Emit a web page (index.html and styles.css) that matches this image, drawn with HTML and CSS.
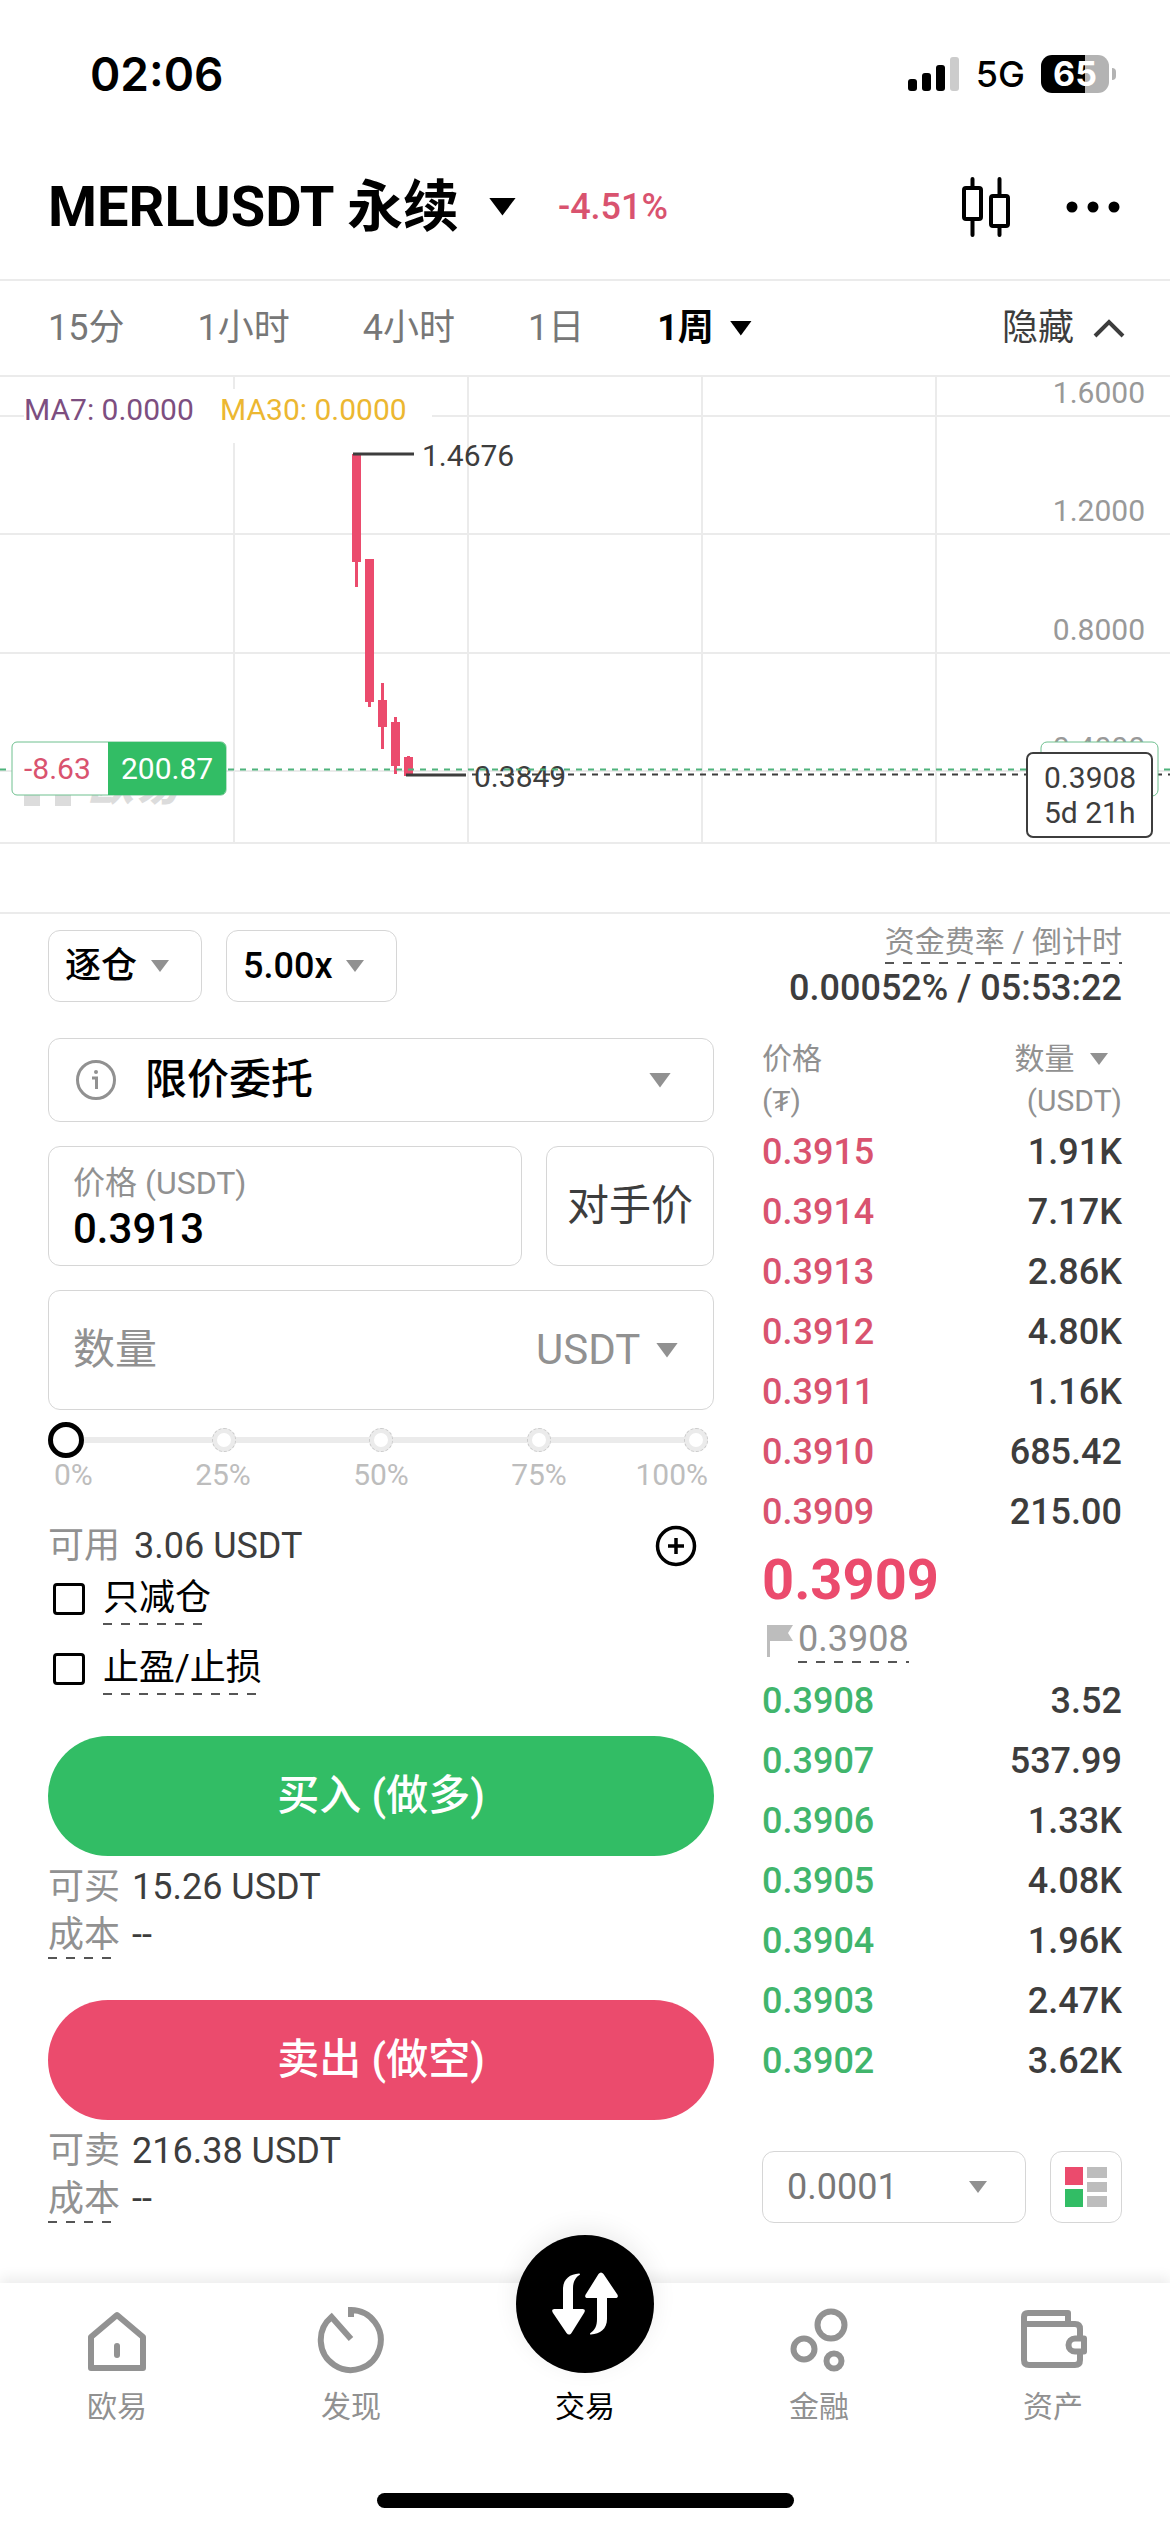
FILE: index.html
```html
<!DOCTYPE html>
<html lang="zh-CN">
<head>
  <meta charset="UTF-8">
  <meta name="viewport" content="width=device-width, initial-scale=1.0">
  <title>MERLUSDT 永续</title>
  <link rel="stylesheet" href="styles.css">
</head>
<body>
  <div class="status-bar">
    <span class="time">02:06</span>
    <div class="status-icons">
      <svg class="signal" viewBox="0 0 52 36" aria-hidden="true">
        <rect x="0" y="23" width="9" height="12" rx="3"/>
        <rect x="14" y="17" width="9" height="18" rx="3"/>
        <rect x="28" y="9" width="9" height="26" rx="3"/>
        <rect x="42" y="1" width="9" height="34" rx="3" fill="#ccc"/>
      </svg>
      <span class="network">5G</span>
      <div class="battery"><span class="battery-body">65</span><span class="battery-tip"></span></div>
    </div>
  </div>

  <header class="header">
    <button class="pair">
      <h1>MERLUSDT 永续</h1>
      <span class="caret caret-lg"></span>
    </button>
    <span class="change">-4.51%</span>
    <div class="header-actions">
      <button aria-label="K线">
        <svg width="48" height="60" viewBox="0 0 48 60" fill="none" stroke="#000" stroke-width="4" stroke-linecap="round">
          <rect x="2" y="11" width="17" height="31" rx="2"/>
          <rect x="29" y="19" width="17" height="30" rx="2"/>
          <path d="M10.500 2v9M10.500 42v16M37.500 2v17M37.500 49v9"/>
        </svg>
      </button>
      <button aria-label="更多">
        <svg width="54" height="12" viewBox="0 0 54 12">
          <circle cx="6" cy="6" r="5.500"/>
          <circle cx="27" cy="6" r="5.500"/>
          <circle cx="48" cy="6" r="5.500"/>
        </svg>
      </button>
    </div>
  </header>

  <nav class="tabs">
    <button>15分</button>
    <button>1小时</button>
    <button>4小时</button>
    <button>1日</button>
    <button class="active">1周 <span class="caret caret-md"></span></button>
    <button class="hide-btn">隐藏
      <svg width="34" height="22" viewBox="0 0 34 22" fill="none" stroke="#3d3d3d" stroke-width="4"><path d="M3 19 17 5l14 14"/></svg>
    </button>
  </nav>

  <svg class="chart" viewBox="0 0 1170 470" fill="#3d3d3d">
    <!-- grid -->
    <path class="grid" d="M0 1H1170M0 41H1170M0 159H1170M0 278H1170M0 396H1170M0 468H1170M234 0V468M468 0V468M702 0V468M936 0V468"/>
    <rect x="24" y="14" width="408" height="54" fill="#fff"/>
    <text x="24" y="45" fill="#7d4e80">MA7: 0.0000</text>
    <text x="220" y="45" fill="#ecb731">MA30: 0.0000</text>

    <!-- axis labels -->
    <g class="axis">
      <text x="1145" y="28">1.6000</text>
      <text x="1145" y="146">1.2000</text>
      <text x="1145" y="265">0.8000</text>
      <text x="1145" y="383">0.4000</text>
    </g>

    <!-- watermark -->
    <g fill="#dcdcdc">
      <path d="M24 398h16v33H24zM55 398h16v33H55z"/>
      <text class="watermark" x="88" y="425">欧易</text>
    </g>

    <!-- candles -->
    <g fill="#eb4b6d">
      <path d="M352 79h9v108h-9zM355 187h3v25h-3z"/>
      <path d="M365 184h9v143h-9zM368 327h3v5h-3z"/>
      <path d="M378 325h9v27h-9zM381 308h3v66h-3z"/>
      <path d="M391 347h9v44h-9zM394 342h3v57h-3z"/>
      <path d="M404 382h9v19h-9zM407 381h3v2h-3z"/>
    </g>
    <path d="M353 79H414M406 400H466" stroke="#3d3d3d" stroke-width="3"/>
    <text x="422" y="91">1.4676</text>
    <text x="474" y="412">0.3849</text>

    <path d="M0 394.500H1170" stroke="#4fb37c" stroke-width="2" stroke-dasharray="6 6"/>
    <path d="M472 399.500H1170" stroke="#3d3d3d" stroke-width="2" stroke-dasharray="6 6"/>

    <!-- position tag -->
    <rect x="12" y="367" width="214" height="53" rx="5" fill="#fff" stroke="#6fc08f"/>
    <path d="M108 367h112a6 6 0 0 1 6 6v41a6 6 0 0 1-6 6H108z" fill="#32bd65"/>
    <text x="24" y="404" fill="#d9536f">-8.63</text>
    <text x="121" y="404" fill="#fff">200.87</text>

    <!-- last price tag -->
    <rect x="1041" y="367" width="117" height="54" rx="6" fill="#fff" stroke="#6fc08f"/>
    <rect x="1027" y="378" width="125" height="84" rx="6" fill="#fff" stroke="#3d3d3d" stroke-width="2"/>
    <text x="1044" y="413">0.3908</text>
    <text x="1044" y="448">5d 21h</text>
  </svg>

  <main class="trade">
    <section class="order-form">
      <div class="margin-row">
        <div class="select">
          <select aria-label="保证金模式"><option>逐仓</option></select>
          <span class="caret caret-sm"></span>
        </div>
        <div class="select">
          <select aria-label="杠杆"><option>5.00x</option></select>
          <span class="caret caret-sm"></span>
        </div>
      </div>

      <div class="box order-type">
        <button aria-label="说明">
          <svg width="42" height="42" viewBox="0 0 42 42" fill="none" stroke="#919191" stroke-width="3">
            <circle cx="21" cy="21" r="18.500"/>
            <path d="M17 19h4.500v11"/>
            <circle cx="21" cy="13" r="2" fill="#919191" stroke="none"/>
          </svg>
        </button>
        <div class="select">
          <select aria-label="委托类型"><option>限价委托</option></select>
          <span class="caret caret-md"></span>
        </div>
      </div>

      <div class="price-row">
        <div class="box price-box">
          <label for="price">价格 (USDT)</label>
          <input id="price" type="text" value="0.3913">
        </div>
        <button class="box counter-btn">对手价</button>
      </div>

      <div class="box amount-box">
        <input type="text" placeholder="数量" aria-label="数量">
        <div class="select">
          <select aria-label="单位"><option>USDT</option></select>
          <span class="caret caret-md"></span>
        </div>
      </div>

      <div class="slider">
        <div class="slider-dots"><i></i><i></i><i></i><i></i><i></i></div>
        <input type="range" min="0" max="100" value="0" aria-label="仓位比例">
      </div>
      <div class="slider-labels"><span>0%</span><span>25%</span><span>50%</span><span>75%</span><span>100%</span></div>

      <div class="available">
        <span class="muted">可用</span> 3.06 USDT
        <button aria-label="充值">
          <svg width="42" height="42" viewBox="0 0 42 42" fill="none" stroke="#000" stroke-width="3.500">
            <circle cx="21" cy="21" r="18.500"/>
            <path d="M13 21h16M21 13v16"/>
          </svg>
        </button>
      </div>

      <label class="check"><input type="checkbox"><span class="dashed">只减仓</span></label>
      <label class="check"><input type="checkbox"><span class="dashed">止盈/止损</span></label>

      <button class="submit buy">买入 (做多)</button>
      <div class="info">
        <p><span class="muted">可买</span> 15.26 USDT</p>
        <p><span class="muted dashed">成本</span> --</p>
      </div>
      <button class="submit sell">卖出 (做空)</button>
      <div class="info">
        <p><span class="muted">可卖</span> 216.38 USDT</p>
        <p><span class="muted dashed">成本</span> --</p>
      </div>
    </section>

    <section class="book">
      <div class="funding">
        <span class="dashed">资金费率 / 倒计时</span>
        <strong>0.00052% / 05:53:22</strong>
      </div>

      <table>
        <thead>
          <tr>
            <th>价格<br>(₮)</th>
            <th>数量 <span class="caret caret-sm"></span><br>(USDT)</th>
          </tr>
        </thead>
        <tbody class="asks">
          <tr><td>0.3915</td><td>1.91K</td></tr>
          <tr><td>0.3914</td><td>7.17K</td></tr>
          <tr><td>0.3913</td><td>2.86K</td></tr>
          <tr><td>0.3912</td><td>4.80K</td></tr>
          <tr><td>0.3911</td><td>1.16K</td></tr>
          <tr><td>0.3910</td><td>685.42</td></tr>
          <tr><td>0.3909</td><td>215.00</td></tr>
        </tbody>
        <tbody>
          <tr>
            <td class="mid" colspan="2">
              <div class="last-price">0.3909</div>
              <div class="mark-price">
                <svg width="28" height="32" viewBox="0 0 28 32" fill="#bdbdbd"><path d="M1 0h26l-5 8 5 8H4v16H1z"/></svg>
                <span class="dashed">0.3908</span>
              </div>
            </td>
          </tr>
        </tbody>
        <tbody class="bids">
          <tr><td>0.3908</td><td>3.52</td></tr>
          <tr><td>0.3907</td><td>537.99</td></tr>
          <tr><td>0.3906</td><td>1.33K</td></tr>
          <tr><td>0.3905</td><td>4.08K</td></tr>
          <tr><td>0.3904</td><td>1.96K</td></tr>
          <tr><td>0.3903</td><td>2.47K</td></tr>
          <tr><td>0.3902</td><td>3.62K</td></tr>
        </tbody>
      </table>

      <div class="book-footer">
        <div class="select">
          <select aria-label="深度"><option>0.0001</option></select>
          <span class="caret caret-sm"></span>
        </div>
        <button class="box" aria-label="盘口布局">
          <svg width="42" height="40" viewBox="0 0 42 40">
            <path d="M0 0h18v18H0z" fill="#eb4b6d"/>
            <path d="M0 22h18v18H0z" fill="#32bd65"/>
            <path d="M22 0h20v11H22zM22 15h20v10H22zM22 29h20v11H22z" fill="#bdbdbd"/>
          </svg>
        </button>
      </div>
    </section>
  </main>

  <footer class="bottom">
    <nav class="bottom-nav">
      <a href="#">
        <svg width="72" height="72" viewBox="0 0 72 72" fill="none" stroke="#929292" stroke-width="6" stroke-linejoin="round" stroke-linecap="round">
          <path d="M10 33 36 11l26 22v31H10z"/>
          <path d="M36 42v9"/>
        </svg>
        欧易
      </a>
      <a href="#">
        <svg width="72" height="72" viewBox="0 0 72 72" fill="none" stroke="#929292" stroke-width="6">
          <path d="M36 13V6a30 30 0 1 1-19.500 7L36 35"/>
        </svg>
        发现
      </a>
      <a href="#" class="active">
        <span class="trade-icon">
          <svg width="66" height="64" viewBox="0 0 66 64" fill="#fff">
            <path d="M27 1.500C18 2 11 7 11 17V37H2.500C0 37 -.500 39 1 41L14.500 61C16 63 18 63 19.500 61L32 41C33.500 39 33 37 30.500 37H21V17C21 10 23 6 27.500 3C28.500 2 28 1.500 27 1.500Z"/>
            <path d="M39 62.500C48 62 55 57 55 47V26H63.500C66 26 66.500 24 65 22L51.500 2C50 0 48 0 46.500 2L34 22C32.500 24 33 26 35.500 26H45V47C45 54 43 58 38.500 61C37.500 62 38 62.500 39 62.500Z"/>
          </svg>
        </span>
        交易
      </a>
      <a href="#">
        <svg width="72" height="72" viewBox="0 0 72 72" fill="none" stroke="#929292" stroke-width="6">
          <circle cx="48" cy="21" r="13.500"/>
          <circle cx="21" cy="45" r="10.500"/>
          <circle cx="51" cy="57" r="7.500"/>
        </svg>
        金融
      </a>
      <a href="#">
        <svg width="72" height="72" viewBox="0 0 72 72" fill="none" stroke="#929292" stroke-width="6" stroke-linejoin="round">
          <path d="M7 20V13q0-4 4-4H51V20M7 20H58q5 0 5 5V33M7 20V56q0 5 5 5H58q5 0 5-5V48M67 34.500H58a6 6 0 0 0 0 13H67z"/>
        </svg>
        资产
      </a>
    </nav>
    <div class="home-bar"></div>
  </footer>
</body>
</html>
```
FILE: styles.css
```css
* {
  margin: 0;
  padding: 0;
  box-sizing: border-box;
}

body {
  font-family: Roboto, 'Noto Sans CJK SC', sans-serif;
  font-size: 36px;
  line-height: 48px;
  color: #3d3d3d;
  background: #fff;
  min-height: 100vh;
  display: flex;
  flex-direction: column;
}

button, input, select {
  font: inherit;
  color: inherit;
  background: none;
  border: none;
  outline: none;
  appearance: none;
}

button, select {
  cursor: pointer;
}

svg {
  display: block;
}

.muted {
  color: #919191;
}

.caret {
  display: inline-block;
  background: currentColor;
  clip-path: polygon(0 0, 100% 0, 50% 100%);
}

.caret-sm {
  width: 18px;
  height: 12px;
  color: #919191;
}

.caret-md {
  width: 22px;
  height: 15px;
}

.caret-lg {
  width: 27px;
  height: 18px;
}

.dashed {
  padding-bottom: 3px;
  background: repeating-linear-gradient(90deg, #555 0 9px, transparent 9px 18px) left bottom / 100% 2px no-repeat;
}

.box, .margin-row .select, .book-footer .select {
  border: 1px solid #d6d6d6;
  border-radius: 12px;
}

.select {
  display: grid;
  align-items: center;
}

.select > * {
  grid-area: 1 / 1;
}

.select select {
  width: 100%;
  height: 100%;
}

.select .caret {
  justify-self: end;
  pointer-events: none;
}

/* Status bar */
.status-bar {
  display: flex;
  justify-content: space-between;
  align-items: center;
  height: 148px;
  padding: 0 54px 0 90px;
  font-family: Inter, sans-serif;
  color: #000;
}

.time {
  font-size: 46px;
  font-weight: 600;
}

.status-icons {
  display: flex;
  align-items: center;
  gap: 16px;
}

.signal {
  width: 52px;
  height: 36px;
}

.network {
  font-weight: 500;
}

.battery {
  display: flex;
  align-items: center;
  gap: 3px;
}

.battery-body {
  width: 68px;
  height: 38px;
  border-radius: 11px;
  background: linear-gradient(90deg, #000 65%, #b3b3b3 65%);
  color: #fff;
  font-size: 34px;
  font-weight: 700;
  line-height: 38px;
  text-align: center;
}

.battery-tip {
  width: 4px;
  height: 12px;
  border-radius: 0 6px 6px 0;
  background: #b3b3b3;
}

/* Header */
.header {
  display: flex;
  align-items: center;
  height: 133px;
  padding: 0 50px 14px 48px;
  border-bottom: 2px solid #ebebeb;
}

.pair {
  display: flex;
  align-items: center;
  gap: 30px;
  color: #000;
}

h1 {
  font-size: 56px;
  font-weight: 700;
  line-height: 64px;
}

.change {
  margin-left: 42px;
  color: #d9536f;
  font-weight: 500;
}

.header-actions {
  display: flex;
  align-items: center;
  gap: 56px;
  margin-left: auto;
}

/* Interval tabs */
.tabs {
  display: flex;
  align-items: center;
  gap: 73px;
  height: 94px;
  padding: 0 44px 0 48px;
}

.tabs button {
  color: #777;
}

.tabs .active {
  display: flex;
  align-items: center;
  gap: 16px;
  color: #000;
  font-weight: 700;
}

.tabs .hide-btn {
  display: flex;
  align-items: center;
  gap: 18px;
  margin-left: auto;
  color: #3d3d3d;
}

/* Chart */
.chart {
  width: 100%;
  font-size: 30px;
}

.grid {
  fill: none;
  stroke: #ebebeb;
  stroke-width: 2;
}

.axis {
  fill: #999;
  text-anchor: end;
}

.watermark {
  font-size: 46px;
  font-weight: 900;
  font-style: italic;
}

/* Trade panel */
.trade {
  display: grid;
  grid-template-columns: 666fr 360fr;
  gap: 48px;
  margin-top: 67px;
  padding: 0 48px 58px;
  border-top: 2px solid #ebebeb;
}

.order-form {
  display: flex;
  flex-direction: column;
  padding-top: 16px;
}

.margin-row {
  display: flex;
  gap: 24px;
  height: 72px;
  margin-bottom: 36px;
  color: #000;
  font-weight: 500;
}

.margin-row select {
  padding: 0 63px 0 16px;
}

.margin-row .caret {
  margin-right: 32px;
}

.order-type {
  display: flex;
  align-items: center;
  gap: 28px;
  height: 84px;
  padding: 0 42px 0 26px;
  margin-bottom: 24px;
  color: #000;
  font-size: 42px;
  font-weight: 500;
}

.order-type .select {
  flex: 1;
}

.order-type .caret,
.amount-box .caret {
  color: #919191;
}

.price-row {
  display: flex;
  gap: 24px;
  height: 120px;
  margin-bottom: 24px;
}

.price-box {
  flex: 1;
  min-width: 0;
  display: flex;
  flex-direction: column;
  justify-content: center;
  padding: 2px 24px 0;
}

.price-box label {
  color: #919191;
  font-size: 32px;
  line-height: 44px;
}

.price-box input {
  width: 100%;
  color: #000;
  font-size: 42px;
  font-weight: 500;
}

.counter-btn {
  padding: 0 20px;
  font-size: 42px;
}

.amount-box {
  display: flex;
  align-items: center;
  height: 120px;
  padding: 0 35px 0 24px;
  margin-bottom: 12px;
  color: #919191;
  font-size: 42px;
}

.amount-box input {
  flex: 1;
  min-width: 0;
}

.amount-box input::placeholder {
  color: #919191;
}

.amount-box select {
  padding-right: 37px;
}

/* Position slider */
.slider {
  display: grid;
  align-items: center;
  height: 36px;
  padding-right: 6px;
}

.slider > * {
  grid-area: 1 / 1;
}

.slider-dots {
  display: flex;
  justify-content: space-between;
  padding-left: 6px;
  background: linear-gradient(#ebebeb, #ebebeb) center / 100% 6px no-repeat;
}

.slider-dots i {
  width: 24px;
  height: 24px;
  border: 5px solid #ebebeb;
  outline: 1px dashed #ccc;
  outline-offset: -1px;
  border-radius: 50%;
  background: #fff;
}

.slider input {
  width: 100%;
  height: 36px;
}

.slider input::-webkit-slider-thumb {
  appearance: none;
  width: 36px;
  height: 36px;
  border: 5px solid #000;
  border-radius: 50%;
  background: #fff;
}

.slider-labels {
  display: grid;
  grid-template-columns: 90px 1fr 1fr 1fr 90px;
  padding: 0 6px;
  color: #bdbdbd;
  font-size: 30px;
  line-height: 34px;
  text-align: center;
}

.slider-labels :first-child {
  text-align: left;
}

.slider-labels :last-child {
  text-align: right;
}

.available {
  display: flex;
  align-items: center;
  gap: 14px;
  height: 48px;
  margin-top: 30px;
}

.available button {
  margin: 0 17px 0 auto;
}

.check {
  display: flex;
  align-items: center;
  gap: 18px;
  height: 54px;
  margin: 2px 0 14px;
  padding-left: 5px;
  color: #000;
  cursor: pointer;
}

.check input {
  width: 32px;
  height: 32px;
  border: 3px solid #000;
  border-radius: 4px;
}

.check input:checked {
  background: #000;
}

.submit {
  height: 120px;
  border-radius: 60px;
  color: #fff;
  font-size: 42px;
  font-weight: 500;
}

.buy {
  margin-top: 26px;
  background: #32bd65;
}

.sell {
  background: #eb4b6d;
}

.info {
  padding: 7px 0 41px;
}

.info:last-child {
  padding-bottom: 0;
}

.info p {
  display: flex;
  gap: 12px;
  height: 48px;
}

/* Order book */
.book {
  padding-top: 8px;
}

.funding {
  display: flex;
  flex-direction: column;
  align-items: flex-end;
  margin-bottom: 26px;
}

.funding .dashed {
  color: #919191;
  font-size: 30px;
  line-height: 39px;
}

.funding strong {
  font-weight: 500;
  white-space: nowrap;
}

.book table {
  width: 100%;
  border-collapse: collapse;
  font-weight: 500;
}

.book th {
  color: #919191;
  font-size: 30px;
  font-weight: 400;
  line-height: 42px;
  text-align: left;
}

.book th .caret {
  margin: 0 14px 4px 8px;
}

.book tr > :last-child:not(.mid) {
  text-align: right;
}

.book td {
  height: 60px;
}

.asks td:first-child {
  color: #d9536f;
}

.bids td:first-child {
  color: #41b56c;
}

.last-price {
  color: #eb4b6d;
  font-size: 56px;
  font-weight: 700;
  line-height: 76px;
}

.mark-price {
  display: flex;
  align-items: center;
  gap: 4px;
  padding: 0 0 8px 4px;
  color: #919191;
  font-weight: 400;
  line-height: 42px;
}

.book-footer {
  display: flex;
  gap: 24px;
  height: 72px;
  margin-top: 60px;
}

.book-footer .select {
  flex: 1;
  color: #777;
}

.book-footer select {
  padding: 0 24px;
}

.book-footer .caret {
  margin-right: 38px;
}

.book-footer button {
  padding: 0 14px;
}

/* Bottom navigation */
.bottom {
  margin-top: auto;
  padding-bottom: 24px;
  background: #fff;
  box-shadow: 0 -6px 12px rgba(0, 0, 0, 0.07);
}

.bottom-nav {
  display: grid;
  grid-template-columns: repeat(5, 1fr);
  padding: 21px 0 66px;
}

.bottom-nav a {
  display: flex;
  flex-direction: column;
  align-items: center;
  gap: 11px;
  color: #919191;
  font-size: 30px;
  line-height: 40px;
  text-decoration: none;
}

.bottom-nav .active {
  color: #000;
}

.trade-icon {
  display: flex;
  align-items: center;
  justify-content: center;
  width: 138px;
  height: 138px;
  margin: -69px 0 3px;
  border-radius: 50%;
  background: #000;
  box-shadow: 0 -6px 24px rgba(0, 0, 0, 0.08);
}

.home-bar {
  width: 417px;
  height: 15px;
  margin: 0 auto;
  border-radius: 8px;
  background: #000;
}
```
